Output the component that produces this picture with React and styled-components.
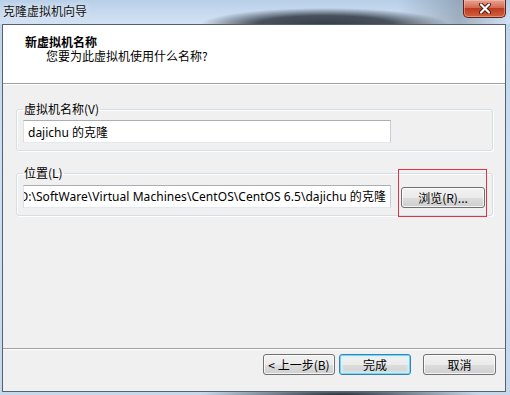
import React from 'react';
import styled, { createGlobalStyle } from 'styled-components';

const GlobalStyle = createGlobalStyle`
    html, body {
        margin: 0;
        padding: 0;
    }
    body {
        width: 510px;
        height: 395px;
        overflow: hidden;
        font-family: "Noto Sans", "Noto Sans CJK SC", sans-serif;
        font-size: 12px;
        color: #000;
    }
`;

const StyledWindow = styled.div`
    width: 510px;
    height: 395px;
    display: flex;
    flex-direction: column;
    background:
        radial-gradient(ellipse 140px 10px at 340px 395px, rgba(30, 36, 44, 0.95), rgba(30, 36, 44, 0) 100%),
        linear-gradient(to bottom, #bed3ea, #cddff1 40%, #c6d8ec);
`;

const StyledTitleBar = styled.div`
    height: 24px;
    display: flex;
    align-items: flex-start;
    justify-content: space-between;
    padding: 0 4px 0 3px;
    background:
        radial-gradient(ellipse 125px 17px at 325px 25px, rgba(48, 56, 66, 0.97) 0%, rgba(48, 56, 66, 0.85) 55%, rgba(48, 56, 66, 0) 100%),
        linear-gradient(to right, rgba(120, 135, 150, 0) 78%, rgba(120, 135, 150, 0.55) 90%, rgba(120, 135, 150, 0) 100%),
        linear-gradient(to bottom, #b8cfe8, #d3e3f4);
`;

const StyledTitle = styled.span`
    line-height: 14px;
    padding-top: 4px;
    font-family: "Noto Sans CJK SC", sans-serif;
    font-size: 12px;
    color: #111;
    text-shadow: 0 0 6px rgba(255, 255, 255, 0.9);
`;

const StyledClose = styled.div`
    width: 43px;
    height: 18px;
    box-sizing: border-box;
    display: flex;
    align-items: center;
    justify-content: center;
    border: 1px solid #5a2418;
    border-top: none;
    border-radius: 0 0 5px 5px;
    background: linear-gradient(to bottom, #e8a493 0%, #d36a53 45%, #c0391f 50%, #d2613c 100%);
    box-shadow: inset 0 0 0 1px rgba(255, 200, 190, 0.45);
`;

const StyledClient = styled.div`
    flex: 1;
    margin: 0 4px 3px 2px;
    display: flex;
    flex-direction: column;
    border: 1px solid #55626f;
    background: #f0f0f0;
`;

const StyledHeader = styled.div`
    height: 59px;
    box-sizing: border-box;
    padding: 10px 0 0 22px;
    background: #fff;
    border-bottom: 1px solid #a0a0a0;
    font-family: "Noto Sans CJK SC", sans-serif;
    line-height: 14px;
`;

const StyledHeading = styled.div`
    font-weight: bold;
`;

const StyledSubHeading = styled.div`
    padding-left: 21px;
`;

const StyledBody = styled.div`
    flex: 1;
    display: flex;
    flex-direction: column;
    gap: 15px;
    padding: 17px 12px 0 13px;
    border-top: 1px solid #fff;
`;

const StyledGroup = styled.fieldset`
    margin: 0;
    padding: 4px 6px 7px 6px;
    border: 1px solid #d5dfe5;
    border-radius: 3px;
    box-shadow: inset 1px 1px 0 #fff, 1px 1px 0 #fff;
    display: flex;
    align-items: center;
    gap: 10px;
`;

const StyledLegend = styled.legend`
    padding: 0 1px;
    margin-left: 0;
    font-family: "Noto Sans CJK SC", sans-serif;
    font-size: 12px;
    line-height: 14px;
`;

const StyledTextBox = styled.input`
    width: 368px;
    height: 23px;
    box-sizing: border-box;
    margin: 0;
    padding: 0 4px;
    border: 1px solid;
    border-color: #abadb3 #c9ced6 #e3e9ef #dbdfe6;
    background: #fff;
    font-family: "Noto Sans", "Noto Sans CJK SC", sans-serif;
    font-size: 12px;
    color: #000;
    outline: none;
`;

const StyledPathBox = styled.div`
    width: 368px;
    height: 23px;
    box-sizing: border-box;
    padding: 0 4px;
    display: flex;
    align-items: center;
    justify-content: flex-end;
    overflow: hidden;
    white-space: nowrap;
    letter-spacing: 0.05px;
    border: 1px solid;
    border-color: #abadb3 #c9ced6 #e3e9ef #dbdfe6;
    background: #fff;
`;

const StyledMarked = styled.div`
    position: relative;
    display: flex;
    margin-top: 3px;
`;

const StyledMark = styled.div`
    position: absolute;
    left: -3px;
    right: -2px;
    top: -18px;
    bottom: -9px;
    border: 1px solid #e0334a;
`;

const StyledButton = styled.button`
    width: ${props => props.$width}px;
    height: 21px;
    box-sizing: border-box;
    margin: 0 0 0 ${props => props.$gap || 0}px;
    padding: 0;
    font-family: "Noto Sans CJK SC", sans-serif;
    font-size: 12px;
    line-height: 18px;
    color: #000;
    border: 1px solid ${props => props.$default ? '#3c7fb1' : '#707070'};
    border-radius: 3px;
    background: linear-gradient(to bottom, #f2f2f2 0%, #ebebeb 50%, #dddddd 51%, #cfcfcf 100%);
    box-shadow: ${props => props.$default
        ? 'inset 0 0 0 1px #6fd8f7, inset 0 0 3px 2px #d4f3fd'
        : 'inset 0 0 0 1px rgba(255, 255, 255, 0.75)'};
`;

const StyledFooter = styled.div`
    display: flex;
    justify-content: flex-end;
    padding: 5px 9px 16px 0;
    border-top: 1px solid #a0a0a0;
    box-shadow: inset 0 1px 0 #fff;
`;

const CloseIcon = () => (
    <svg width="14" height="11" viewBox="0 0 14 11">
        <path d="M3 1.5 L11 9.5 M11 1.5 L3 9.5" stroke="#4a1a10" strokeWidth="4" strokeLinecap="round" />
        <path d="M3 1.5 L11 9.5 M11 1.5 L3 9.5" stroke="#fff" strokeWidth="2.2" strokeLinecap="round" />
    </svg>
);

export default class App extends React.Component {
    render() {
        return (
            <StyledWindow>
                <GlobalStyle />
                <StyledTitleBar>
                    <StyledTitle>克隆虚拟机向导</StyledTitle>
                    <StyledClose><CloseIcon /></StyledClose>
                </StyledTitleBar>
                <StyledClient>
                    <StyledHeader>
                        <StyledHeading>新虚拟机名称</StyledHeading>
                        <StyledSubHeading>您要为此虚拟机使用什么名称?</StyledSubHeading>
                    </StyledHeader>
                    <StyledBody>
                        <StyledGroup>
                            <StyledLegend>虚拟机名称(V)</StyledLegend>
                            <StyledTextBox type='text' defaultValue='dajichu 的克隆' />
                        </StyledGroup>
                        <StyledGroup>
                            <StyledLegend>位置(L)</StyledLegend>
                            <StyledPathBox>
                                <span>D:\SoftWare\Virtual Machines\CentOS\CentOS 6.5\dajichu 的克隆</span>
                            </StyledPathBox>
                            <StyledMarked>
                                <StyledButton $width={84}>浏览(R)...</StyledButton>
                                <StyledMark />
                            </StyledMarked>
                        </StyledGroup>
                    </StyledBody>
                    <StyledFooter>
                        <StyledButton $width={72}>&lt; 上一步(B)</StyledButton>
                        <StyledButton $width={72} $gap={4} $default>完成</StyledButton>
                        <StyledButton $width={73} $gap={12}>取消</StyledButton>
                    </StyledFooter>
                </StyledClient>
            </StyledWindow>
        );
    }
}
